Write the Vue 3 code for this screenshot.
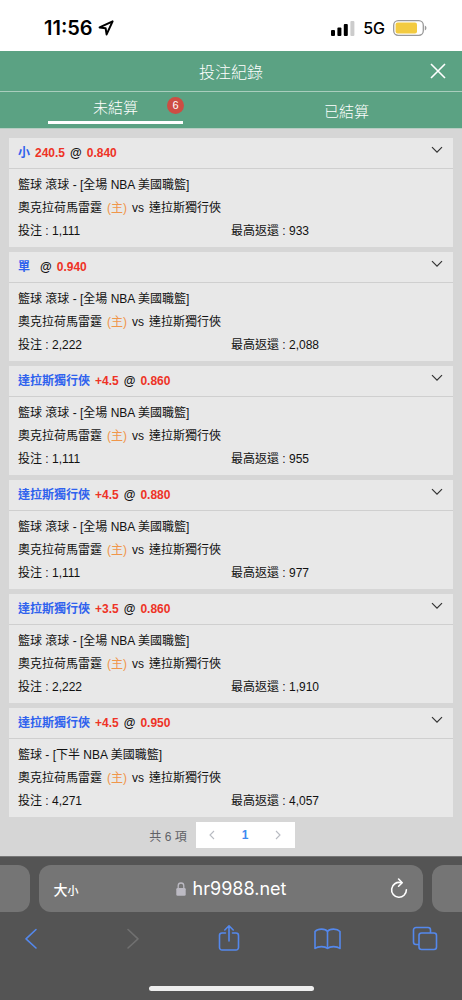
<template>
  <div class="page">
    <div class="status">
      <div class="status__left">
        <span class="status__time">11:56</span>
        <svg width="16" height="16" viewBox="0 0 16 16" aria-hidden="true">
          <path d="M14.6 1.3 1.6 7.4 7.6 8.2 8.6 14.4Z" fill="none" stroke="#000" stroke-width="2" stroke-linejoin="round" />
        </svg>
      </div>
      <div class="status__right">
        <svg width="24" height="16" viewBox="0 0 24 16" aria-hidden="true">
          <rect x="0" y="10" width="4" height="6" rx="1" />
          <rect x="6.4" y="7.4" width="4" height="8.6" rx="1" />
          <rect x="12.8" y="4" width="4" height="12" rx="1" />
          <rect x="19.4" y="1" width="4" height="15" rx="1" fill="#ccc" />
        </svg>
        <span class="status__net">5G</span>
        <svg width="34" height="16" viewBox="0 0 34 16" aria-hidden="true">
          <rect x="0.7" y="0.7" width="29.6" height="14.6" rx="4.5" fill="#fff" stroke="#999" stroke-width="1.3" />
          <rect x="2.6" y="2.6" width="21.4" height="10.8" rx="2" fill="#f3cb41" />
          <path d="M31.8 5.4v5.2q1.7-.8 1.7-2.6t-1.7-2.6Z" fill="#999" />
        </svg>
      </div>
    </div>

    <header class="head">
      <h1 class="head__title">投注紀錄</h1>
      <button type="button" class="head__close" aria-label="關閉">
        <svg width="16" height="16" viewBox="0 0 16 16">
          <path d="M1 1 15 15M15 1 1 15" fill="none" stroke="#fff" stroke-width="1.6" />
        </svg>
      </button>
    </header>

    <nav class="tabs">
      <button
        v-for="t in tabs"
        :key="t.id"
        type="button"
        class="tabs__item"
        :class="{ on: activeTab === t.id }"
        @click="activeTab = t.id"
      >
        <span class="tabs__label">
          {{ t.label }}
          <span v-if="t.count" class="tabs__badge">{{ t.count }}</span>
        </span>
      </button>
    </nav>

    <main class="list">
      <article v-for="bet in bets" :key="bet.id" class="bet">
        <div class="bet__head">
          <p class="bet__pick">
            <span class="bet__side">{{ bet.side }}</span>
            <span class="bet__line">{{ bet.line }}</span>
            <span>@</span>
            <span class="bet__odds">{{ bet.odds }}</span>
          </p>
          <button type="button" class="bet__toggle" aria-label="展開">
            <svg width="12" height="8" viewBox="0 0 12 8">
              <path d="M1 1.2 6 6.2 11 1.2" fill="none" stroke="#333" stroke-width="1.2" />
            </svg>
          </button>
        </div>
        <div class="bet__body">
          <p>{{ bet.league }}</p>
          <p class="bet__teams">
            <span>奧克拉荷馬雷霆</span>
            <span class="bet__home">(主)</span>
            <span>vs</span>
            <span>達拉斯獨行俠</span>
          </p>
          <p class="bet__money">
            <span>投注 : {{ bet.stake }}</span>
            <span>最高返還 : {{ bet.payout }}</span>
          </p>
        </div>
      </article>

      <div class="pager">
        <span class="pager__total">共 {{ bets.length }} 項</span>
        <div class="pager__box">
          <button type="button" aria-label="上一頁" disabled>
            <svg width="6" height="10" viewBox="0 0 6 10">
              <path d="M5 1 1 5 5 9" fill="none" stroke="#b8bbc2" stroke-width="1.1" />
            </svg>
          </button>
          <button type="button" class="on">1</button>
          <button type="button" aria-label="下一頁" disabled>
            <svg width="6" height="10" viewBox="0 0 6 10">
              <path d="M1 1 5 5 1 9" fill="none" stroke="#b8bbc2" stroke-width="1.1" />
            </svg>
          </button>
        </div>
      </div>
    </main>

    <footer class="browser">
      <div class="browser__row">
        <div class="browser__peek left" />
        <div class="browser__address">
          <button type="button" class="browser__size" aria-label="文字大小">大<small>小</small></button>
          <span class="browser__url">
            <svg width="10" height="14" viewBox="0 0 10 14" aria-hidden="true">
              <path d="M2.2 7V3.8a2.8 2.8 0 0 1 5.6 0V7" fill="none" stroke="#bcbac3" stroke-width="1.3" />
              <rect x="0.3" y="6" width="9.4" height="7.8" rx="1.2" fill="#bcbac3" />
            </svg>
            hr9988.net
          </span>
          <button type="button" class="browser__reload" aria-label="重新載入">
            <svg width="18" height="22" viewBox="0 0 18 22">
              <path d="M10.6 4.6A7.4 7.4 0 1 0 16.4 11.8" fill="none" stroke="#fff" stroke-width="1.6" stroke-linecap="round" />
              <path d="M8.6 1 12.2 4.700 8.6 8.200" fill="none" stroke="#fff" stroke-width="1.6" stroke-linecap="round" stroke-linejoin="round" />
            </svg>
          </button>
        </div>
        <div class="browser__peek right" />
      </div>

      <div class="browser__tools">
        <button v-for="tool in tools" :key="tool.id" type="button" :aria-label="tool.label" :disabled="tool.disabled">
          <svg width="28" height="28" viewBox="0 0 28 28">
            <path :d="tool.path" />
          </svg>
        </button>
      </div>
      <div class="browser__home" />
    </footer>
  </div>
</template>

<script setup>
import { ref } from 'vue';

const activeTab = ref('open');

const tabs = [
  { id: 'open', label: '未結算', count: 6 },
  { id: 'settled', label: '已結算' }
];

const FULL = '籃球 滾球 - [全場 NBA 美國職籃]';
const HALF = '籃球 - [下半 NBA 美國職籃]';

const bets = [
  { id: 1, side: '小', line: '240.5', odds: '0.840', league: FULL, stake: '1,111', payout: '933' },
  { id: 2, side: '單', line: '', odds: '0.940', league: FULL, stake: '2,222', payout: '2,088' },
  { id: 3, side: '達拉斯獨行俠', line: '+4.5', odds: '0.860', league: FULL, stake: '1,111', payout: '955' },
  { id: 4, side: '達拉斯獨行俠', line: '+4.5', odds: '0.880', league: FULL, stake: '1,111', payout: '977' },
  { id: 5, side: '達拉斯獨行俠', line: '+3.5', odds: '0.860', league: FULL, stake: '2,222', payout: '1,910' },
  { id: 6, side: '達拉斯獨行俠', line: '+4.5', odds: '0.950', league: HALF, stake: '4,271', payout: '4,057' }
];

const tools = [
  { id: 'back', label: '返回', path: 'M19 5.500 9 14.800 19 24' },
  { id: 'forward', label: '前進', disabled: true, path: 'M12 5.500 22 14.800 12 24' },
  {
    id: 'share',
    label: '分享',
    path: 'M11.5 9H8a2.5 2.5 0 0 0-2.5 2.5V23.5A2.5 2.5 0 0 0 8 26H22a2.5 2.5 0 0 0 2.5-2.5V11.5A2.5 2.5 0 0 0 22 9H18.5M15 17V2M10.8 6 15 1.800 19.200 6'
  },
  {
    id: 'bookmarks',
    label: '書籤',
    path: 'M14.500 7.500C12.500 4.500 5 4.200 2 7.500V24.500C5 22 12 22 14.500 24.500C17 22 24 22 27 24.500V7.500C24 4.200 16.500 4.500 14.500 7.500V24.500'
  },
  {
    id: 'tabs',
    label: '分頁',
    path: 'M8 20.5H5A2.5 2.5 0 0 1 2.500 18V6A2.5 2.5 0 0 1 5 3.500H17A2.5 2.5 0 0 1 19.500 6V9M10.500 9H23A2.5 2.5 0 0 1 25.500 11.500V23A2.5 2.5 0 0 1 23 25.500H10.500A2.5 2.5 0 0 1 8 23V11.500A2.5 2.5 0 0 1 10.500 9Z'
  }
];
</script>

<style>
body {
  margin: 0;
  background: #d6d6d6;
}
</style>

<style scoped>
.page {
  display: flex;
  flex-direction: column;
  min-height: 100vh;
  font-family: 'Liberation Sans', 'Noto Sans CJK TC', sans-serif;
  font-size: 12px;
  color: #111;
}
h1,
p {
  margin: 0;
}
button {
  appearance: none;
  border: 0;
  padding: 0;
  background: none;
  font: inherit;
  color: inherit;
  cursor: pointer;
}
svg {
  display: block;
}
.status {
  display: flex;
  justify-content: space-between;
  align-items: center;
  height: 51px;
  padding: 4px 35px 0 44px;
  box-sizing: border-box;
  background: #fff;
  color: #000;
  font-family: Inter, sans-serif;
}
.status__left,
.status__right {
  display: flex;
  align-items: center;
}
.status__left {
  gap: 5px;
}
.status__right {
  gap: 8px;
}
.status__time {
  font-size: 20px;
  font-weight: 600;
}
.status__net {
  font-size: 16px;
  font-weight: 500;
}
.head {
  display: grid;
  grid-template-columns: 48px 1fr 48px;
  align-items: center;
  height: 40px;
  background: #5ba283;
  border-bottom: 1px solid #a9cdbd;
  color: #fff;
}
.head__title {
  grid-column: 2;
  font-size: 16px;
  font-weight: 300;
  text-align: center;
}
.head__close {
  display: grid;
  place-items: center;
  height: 40px;
}
.tabs {
  display: grid;
  grid-template-columns: 1fr 1fr;
  justify-items: center;
  height: 36px;
  background: #5ba283;
  border-bottom: 1px solid #b7cdc2;
  color: #fff;
}
.tabs__item {
  width: 135px;
  height: 36px;
  font-size: 15px;
  font-weight: 300;
}
.tabs__item.on {
  height: 32px;
  border-bottom: 3px solid #fff;
}
.tabs__label {
  position: relative;
}
.tabs__badge {
  position: absolute;
  top: -2px;
  right: -46px;
  width: 17px;
  border-radius: 9px;
  background: #cd4d43;
  font-size: 11px;
  line-height: 17px;
}
.list {
  flex: 1;
  display: flex;
  flex-direction: column;
  gap: 5px;
  padding: 9px 9px 8px;
  background: #d6d6d6;
}
.bet {
  background: #e8e8e8;
}
.bet__head {
  display: flex;
  justify-content: space-between;
  height: 30px;
  padding: 0 10px 0 9px;
  border-bottom: 1px solid #cfcfcf;
}
.bet__pick {
  display: flex;
  gap: 5px;
  font-weight: 700;
  line-height: 30px;
}
.bet__side {
  color: #2f62ee;
}
.bet__line,
.bet__odds {
  color: #ee3326;
}
.bet__toggle {
  height: 23px;
}
.bet__body {
  padding: 5px 9px 4px;
  line-height: 23px;
}
.bet__teams {
  display: flex;
  flex-wrap: wrap;
  column-gap: 5px;
}
.bet__home {
  color: #f0964a;
}
.bet__money {
  display: grid;
  grid-template-columns: 1fr 1fr;
}
.pager {
  display: flex;
  align-items: center;
  justify-content: center;
  gap: 9px;
  padding-right: 18px;
  color: #606266;
}
.pager__box {
  display: flex;
  background: #fff;
}
.pager__box button {
  display: grid;
  place-items: center;
  width: 33px;
  height: 26px;
}
.pager__box .on {
  color: #3d8af0;
  font-weight: 700;
}
.browser {
  background: #545454;
  border-top: 1px solid #777;
  padding: 8px 0 9px;
}
.browser__row {
  display: flex;
  gap: 9px;
  height: 47px;
}
.browser__peek {
  width: 30px;
  background: #757575;
}
.browser__peek.left {
  border-radius: 0 12px 12px 0;
}
.browser__peek.right {
  border-radius: 12px 0 0 12px;
}
.browser__address {
  flex: 1;
  display: grid;
  grid-template-columns: 48px 1fr 48px;
  align-items: center;
  border-radius: 12px;
  background: #757575;
  color: #fff;
}
.browser__size {
  padding-left: 6px;
  font-size: 14px;
  font-weight: 500;
}
.browser__size small {
  font-size: 11px;
}
.browser__url {
  display: flex;
  align-items: center;
  justify-content: center;
  gap: 7px;
  font-family: Inter, sans-serif;
  font-size: 18px;
}
.browser__reload {
  display: grid;
  place-items: center;
}
.browser__tools {
  display: flex;
  justify-content: space-between;
  padding: 12px 23px 0 17px;
}
.browser__tools path {
  fill: none;
  stroke: #5488ec;
  stroke-width: 1.6;
  stroke-linecap: round;
  stroke-linejoin: round;
}
.browser__tools button:disabled path {
  stroke: #707070;
}
.browser__home {
  width: 165px;
  height: 5px;
  margin: 34px auto 0;
  border-radius: 3px;
  background: #eee;
}
</style>
